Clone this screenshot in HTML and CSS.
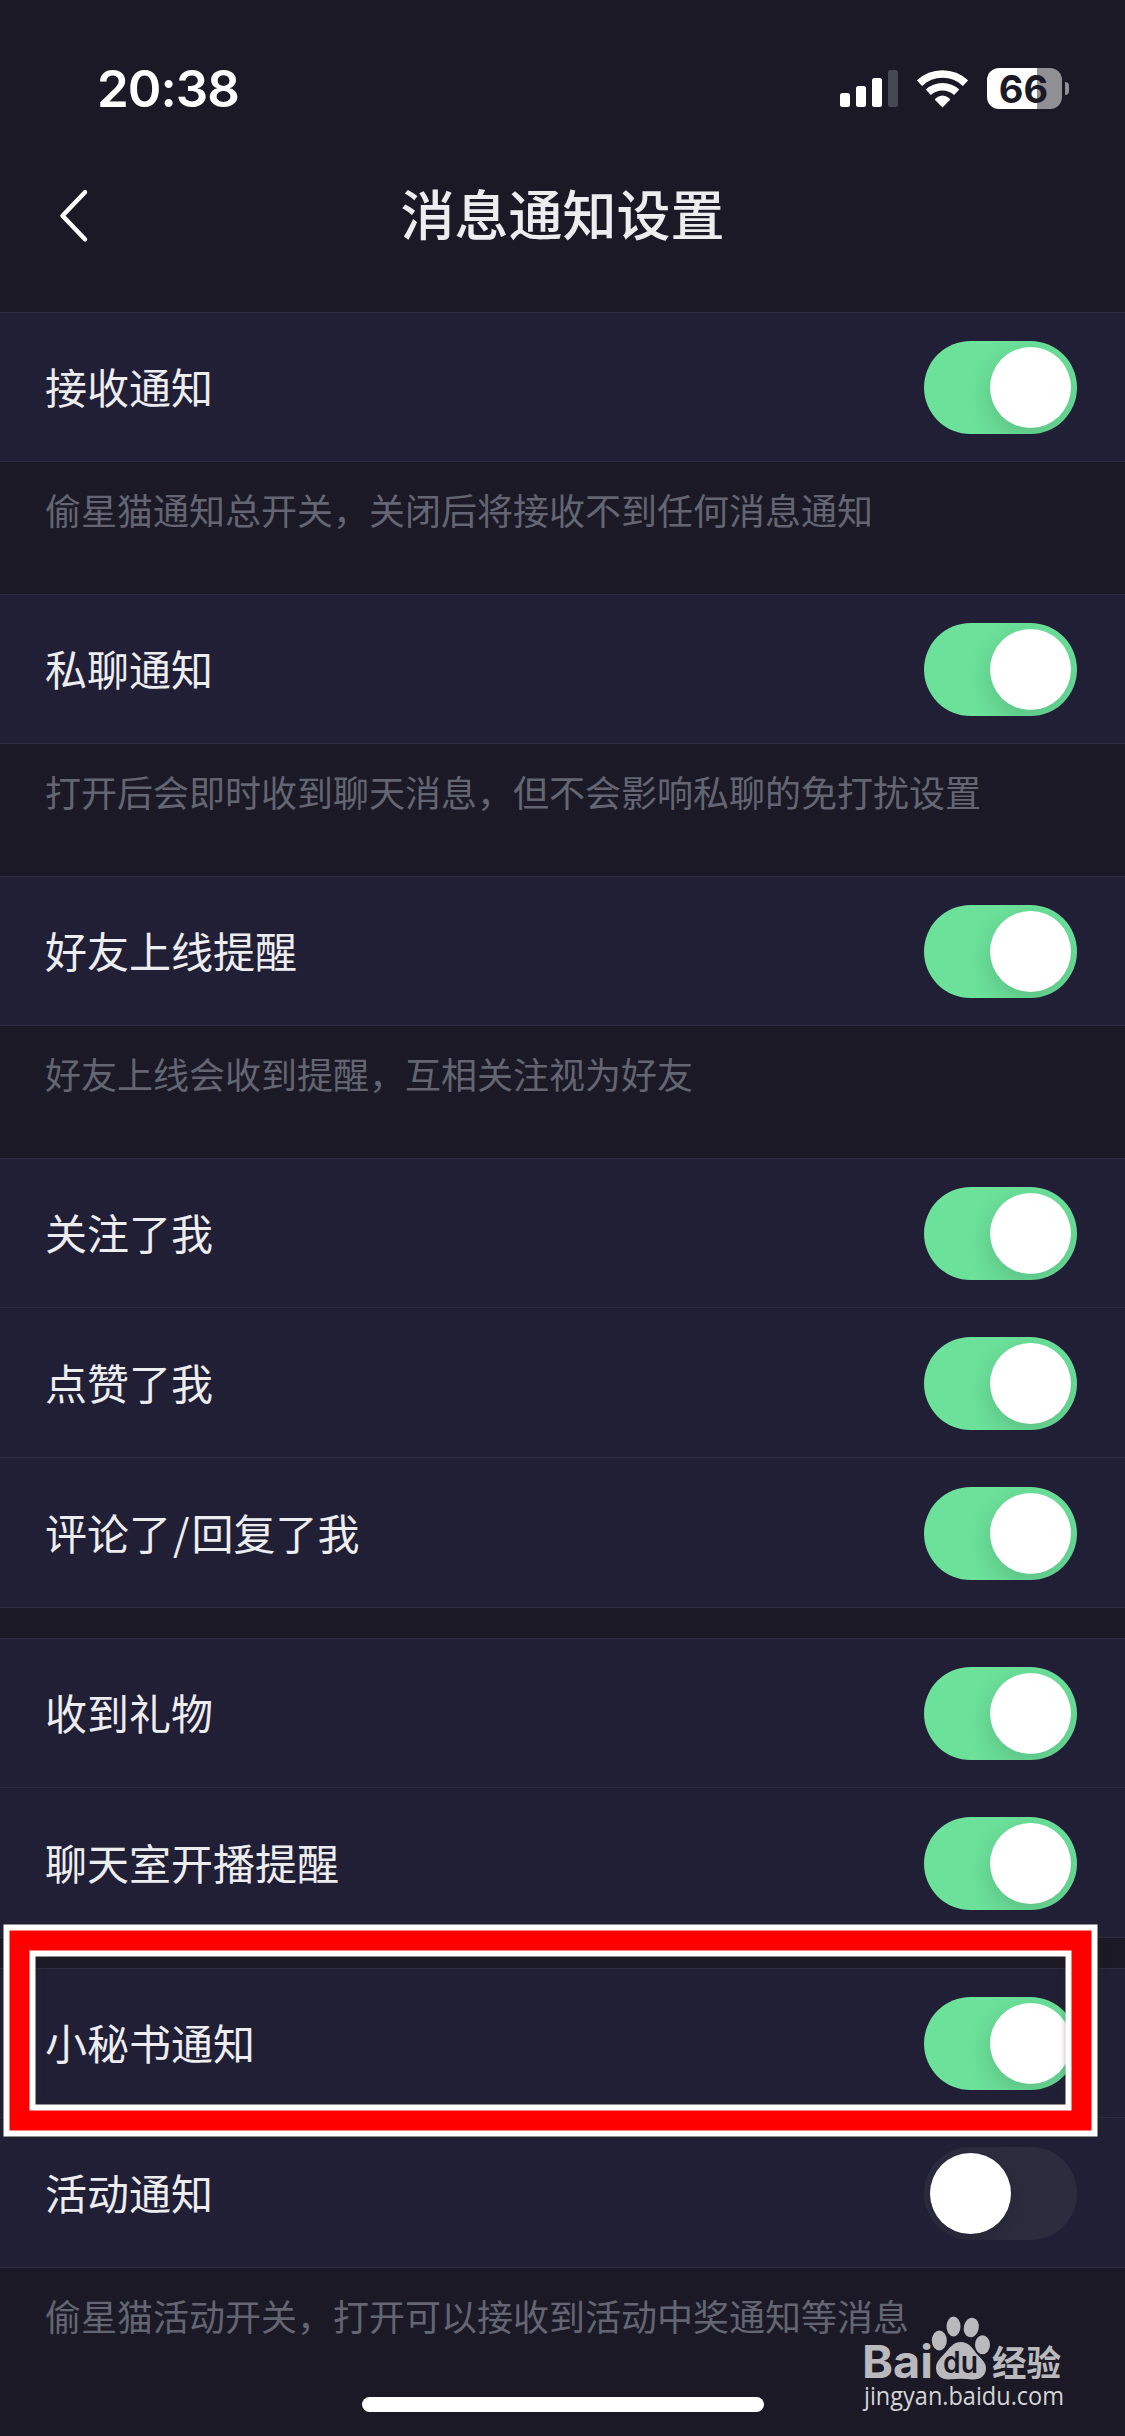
FILE: index.html
```html
<!DOCTYPE html>
<html lang="zh-CN">
<head>
<meta charset="utf-8">
<title>消息通知设置</title>
<link rel="stylesheet" href="styles.css">
</head>
<body>
<div class="screen">
  <header class="status">
    <span class="time">20:38</span>
    <div class="indicators">
      <svg class="signal" width="58" height="37" viewBox="0 0 58 37">
        <rect x="0" y="23" width="10" height="14" rx="2.5"/>
        <rect x="16" y="16" width="10" height="21" rx="2.5"/>
        <rect x="32" y="8" width="10" height="29" rx="2.5"/>
        <rect x="48" y="0" width="10" height="37" rx="2.5" class="dim"/>
      </svg>
      <svg class="wifi" width="51" height="38" viewBox="0 0 51 38">
        <path class="arc" d="M2.5 13.1A33.7 33.7 0 0 1 48.5 13.1"/>
        <path class="arc" d="M11.3 22.3A20.9 20.9 0 0 1 39.7 22.3"/>
        <path d="M25.5 37.5L18.4 30.2Q17.6 29.2 18.7 28.3Q25.5 22.8 32.3 28.3Q33.4 29.2 32.6 30.2Z"/>
      </svg>
      <div class="battery"><span class="level">66</span><i class="nub"></i></div>
    </div>
  </header>
  <nav class="navbar">
    <svg class="back" width="32" height="56" viewBox="0 0 32 56"><path d="M27 4.2L4.5 27.7L27 51.3"/></svg>
    <h1 class="title">消息通知设置</h1>
  </nav>
  <main>
    <section class="group"><div class="row"><span>接收通知</span><i class="toggle on"></i></div></section>
    <p class="hint">偷星猫通知总开关，关闭后将接收不到任何消息通知</p>
    <section class="group"><div class="row"><span>私聊通知</span><i class="toggle on"></i></div></section>
    <p class="hint">打开后会即时收到聊天消息，但不会影响私聊的免打扰设置</p>
    <section class="group"><div class="row"><span>好友上线提醒</span><i class="toggle on"></i></div></section>
    <p class="hint">好友上线会收到提醒，互相关注视为好友</p>
    <section class="group spaced">
      <div class="row"><span>关注了我</span><i class="toggle on"></i></div>
      <div class="row"><span>点赞了我</span><i class="toggle on"></i></div>
      <div class="row"><span>评论了<span class="slash">/</span>回复了我</span><i class="toggle on"></i></div>
    </section>
    <section class="group spaced">
      <div class="row"><span>收到礼物</span><i class="toggle on"></i></div>
      <div class="row"><span>聊天室开播提醒</span><i class="toggle on"></i></div>
    </section>
    <section class="group">
      <div class="row"><span>小秘书通知</span><i class="toggle on"></i></div>
      <div class="row"><span>活动通知</span><i class="toggle"></i></div>
    </section>
    <p class="hint">偷星猫活动开关，打开可以接收到活动中奖通知等消息</p>
  </main>
  <svg class="marker" width="1125" height="240" viewBox="0 0 1125 240">
    <rect class="outer" x="19.5" y="30.5" width="1062" height="180"/>
    <rect class="inner" x="19.5" y="30.5" width="1062" height="180"/>
  </svg>
  <svg class="watermark" width="225" height="110" viewBox="0 0 225 110">
    <g class="logo">
      <text class="bai" x="9" y="68" textLength="71" lengthAdjust="spacingAndGlyphs">Bai</text>
      <ellipse cx="86.3" cy="30.5" rx="7.5" ry="10"/>
      <ellipse cx="100.5" cy="16.5" rx="7" ry="10"/>
      <ellipse cx="118.3" cy="17.5" rx="7.5" ry="9.8" transform="rotate(12 118.3 17.5)"/>
      <ellipse cx="129.5" cy="34.8" rx="7.5" ry="9.5"/>
      <path d="M108 32C115 32 119 37 123 43C128 49 133 52 133 58C133 66 127 70 119 69.5Q108 68 98 69.3C89 70 83 66 83 58C83 51 88 48 93 42C97 37 101 32 108 32Z"/>
      <text class="cn" x="139" y="66" textLength="69" lengthAdjust="spacingAndGlyphs">经验</text>
      <text class="du" x="90" y="62.5" textLength="35" lengthAdjust="spacingAndGlyphs">du</text>
    </g>
    <text class="url" x="11" y="95" textLength="200" lengthAdjust="spacingAndGlyphs">jingyan.baidu.com</text>
  </svg>
  <div class="home"></div>
</div>
</body>
</html>
```
FILE: styles.css
```css
body {
  margin: 0;
  background: #1a1925;
  font-family: "Noto Sans CJK SC", sans-serif;
}
.screen {
  position: relative;
  width: 1125px;
  height: 2436px;
  overflow: hidden;
  color: #ededf0;
}
.status {
  box-sizing: border-box;
  height: 150px;
  padding: 68px 56px 0 97px;
  display: flex;
  justify-content: space-between;
  align-items: flex-start;
  font-family: Inter, sans-serif;
  color: #fff;
}
.time {
  font-size: 51px;
  line-height: 42px;
  font-weight: 600;
  letter-spacing: -1px;
}
.indicators {
  display: flex;
  align-items: flex-start;
  fill: #fff;
}
.signal { margin: 2px 19px 0 0; }
.dim { fill: #474653; }
.wifi { margin: 2px 19px 0 0; }
.arc {
  fill: none;
  stroke: #fff;
  stroke-width: 7.6;
}
.battery {
  display: flex;
  align-items: center;
  gap: 3px;
  height: 41px;
}
.level {
  width: 75px;
  height: 41px;
  border-radius: 12px;
  background: linear-gradient(90deg, #fff 50px, #8f8f94 50px);
  color: #1a1925;
  font-size: 38px;
  line-height: 42px;
  font-weight: 700;
  text-align: center;
  text-indent: -2px;
}
.nub {
  width: 4px;
  height: 13px;
  border-radius: 0 8px 8px 0;
  background: #8f8f94;
}
.navbar {
  display: grid;
  grid-template-columns: 1fr auto 1fr;
  align-items: center;
  height: 132px;
  margin-bottom: 30px;
}
.back {
  margin-left: 58px;
  fill: none;
  stroke: #fff;
  stroke-width: 4.5;
  stroke-linecap: round;
  stroke-linejoin: round;
}
.title {
  margin: 0;
  padding-bottom: 6px;
  font-size: 54px;
  line-height: 80px;
  font-weight: 500;
}
.group {
  border-top: 1px solid #2c2b40;
  background: #201f36;
}
.spaced { margin-bottom: 30px; }
.row {
  box-sizing: border-box;
  display: flex;
  justify-content: space-between;
  height: 150px;
  padding: 29px 48px 0 45px;
  border-bottom: 1px solid #2c2b40;
  font-size: 42px;
  line-height: 90px;
}
.row:first-child {
  height: 149px;
  padding-top: 28px;
}
.slash { padding: 0 2px; }
.toggle {
  box-sizing: border-box;
  width: 153px;
  height: 93px;
  padding: 6px;
  border-radius: 47px;
  background: #2d2c3f;
  overflow: hidden;
}
.toggle::before {
  content: "";
  display: block;
  width: 81px;
  height: 81px;
  border-radius: 50%;
  background: #fff;
  box-shadow: 0 9px 24px rgba(0, 0, 0, .15);
}
.toggle.on { background: #6be19a; }
.toggle.on::before { margin-left: auto; }
.hint {
  box-sizing: border-box;
  height: 132px;
  margin: 0;
  padding: 20px 45px 0;
  font-size: 36px;
  line-height: 54px;
  color: #636672;
}
.marker {
  position: absolute;
  left: 0;
  top: 1910px;
  fill: none;
  filter: drop-shadow(1px 1px 3px rgba(40, 40, 30, .5));
}
.outer { stroke: #fff; stroke-width: 32; }
.inner { stroke: #f00; stroke-width: 20; }
.watermark {
  position: absolute;
  left: 853px;
  top: 2310px;
}
.logo { fill: #bab9be; }
.bai { font: 700 45px Inter, sans-serif; }
.du { font: 600 30px Inter, sans-serif; fill: #1a1925; }
.cn { font: 700 35px "Noto Sans CJK SC", sans-serif; }
.url { font: 500 25px "Open Sans", sans-serif; fill: #d5d5d8; }
.home {
  position: absolute;
  left: 362px;
  top: 2397px;
  width: 402px;
  height: 15px;
  border-radius: 8px;
  background: #fff;
}
```
